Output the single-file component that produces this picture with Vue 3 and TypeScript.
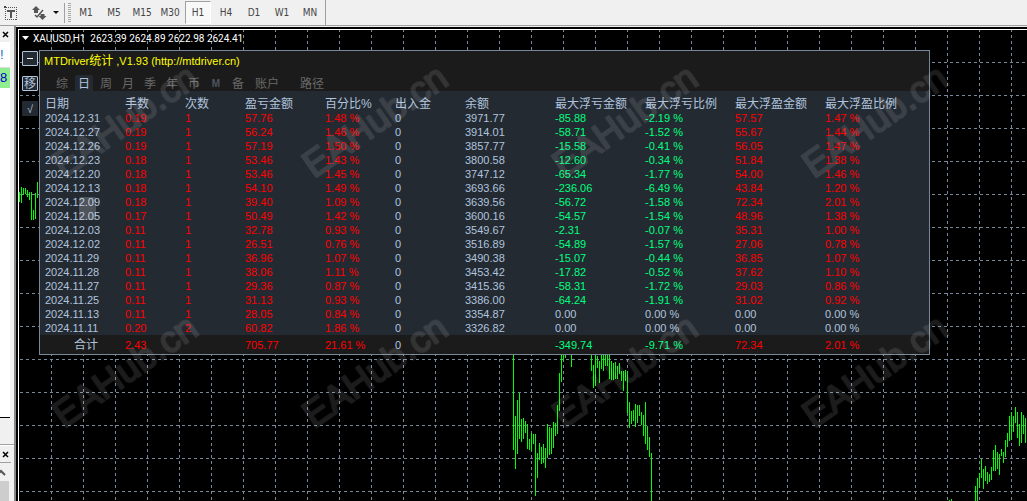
<script setup lang="ts">
interface Bar { x: number; top: number; height: number }

const timeframes: string[] = ['M1', 'M5', 'M15', 'M30', 'H1', 'H4', 'D1', 'W1', 'MN']
const tabs: string[] = ['综', '日', '周', '月', '季', '年', '币', 'M', '备', '账户', '路径']
const headers: string[] = ['日期', '手数', '次数', '盈亏金额', '百分比%', '出入金', '余额', '最大浮亏金额', '最大浮亏比例', '最大浮盈金额', '最大浮盈比例']

const rows: string[][] = [
  ['2024.12.31', '0.19', '1', '57.76', '1.48 %', '0', '3971.77', '-85.88', '-2.19 %', '57.57', '1.47 %'],
  ['2024.12.27', '0.19', '1', '56.24', '1.46 %', '0', '3914.01', '-58.71', '-1.52 %', '55.67', '1.44 %'],
  ['2024.12.26', '0.19', '1', '57.19', '1.50 %', '0', '3857.77', '-15.58', '-0.41 %', '56.05', '1.47 %'],
  ['2024.12.23', '0.18', '1', '53.46', '1.43 %', '0', '3800.58', '-12.60', '-0.34 %', '51.84', '1.38 %'],
  ['2024.12.20', '0.18', '1', '53.46', '1.45 %', '0', '3747.12', '-65.34', '-1.77 %', '54.00', '1.46 %'],
  ['2024.12.13', '0.18', '1', '54.10', '1.49 %', '0', '3693.66', '-236.06', '-6.49 %', '43.84', '1.20 %'],
  ['2024.12.09', '0.18', '1', '39.40', '1.09 %', '0', '3639.56', '-56.72', '-1.58 %', '72.34', '2.01 %'],
  ['2024.12.05', '0.17', '1', '50.49', '1.42 %', '0', '3600.16', '-54.57', '-1.54 %', '48.96', '1.38 %'],
  ['2024.12.03', '0.11', '1', '32.78', '0.93 %', '0', '3549.67', '-2.31', '-0.07 %', '35.31', '1.00 %'],
  ['2024.12.02', '0.11', '1', '26.51', '0.76 %', '0', '3516.89', '-54.89', '-1.57 %', '27.06', '0.78 %'],
  ['2024.11.29', '0.11', '1', '36.96', '1.07 %', '0', '3490.38', '-15.07', '-0.44 %', '36.85', '1.07 %'],
  ['2024.11.28', '0.11', '1', '38.06', '1.11 %', '0', '3453.42', '-17.82', '-0.52 %', '37.62', '1.10 %'],
  ['2024.11.27', '0.11', '1', '29.36', '0.87 %', '0', '3415.36', '-58.31', '-1.72 %', '29.03', '0.86 %'],
  ['2024.11.25', '0.11', '1', '31.13', '0.93 %', '0', '3386.00', '-64.24', '-1.91 %', '31.02', '0.92 %'],
  ['2024.11.13', '0.11', '1', '28.05', '0.84 %', '0', '3354.87', '0.00', '0.00 %', '0.00', '0.00 %'],
  ['2024.11.11', '0.20', '2', '60.82', '1.86 %', '0', '3326.82', '0.00', '0.00 %', '0.00', '0.00 %'],
]
const totals: string[] = ['合计', '2.43', '', '705.77', '21.61 %', '0', '', '-349.74', '-9.71 %', '72.34', '2.01 %']

function tone(value: string, column: number): string {
  if (column === 0 || column === 6) return ''
  const n = parseFloat(value)
  return n > 0 ? 'gain' : n < 0 ? 'loss' : ''
}

// Each run: first x, then the high/low of consecutive bars placed two pixels apart.
function run(start: number, ranges: number[][]): Bar[] {
  return ranges.map(([top, bottom], i) => ({ x: start + i * 2, top, height: bottom - top }))
}

const bars: Bar[] = [
  ...run(0, [[162, 172], [157, 173], [158, 165], [158, 164], [160, 167], [162, 170], [162, 190], [180, 190], [163, 189], [152, 168]]),
  ...run(494, [[320, 420], [386, 439], [370, 424], [363, 409], [389, 412], [388, 409], [391, 403], [394, 419], [409, 420], [403, 421], [404, 414], [404, 466], [423, 448], [413, 430], [417, 434], [414, 433], [418, 438], [394, 428], [397, 425], [398, 424], [392, 418], [393, 406], [375, 404], [343, 381], [320, 352], [320, 331], [320, 328]]),
  ...run(552, [[320, 337]]),
  ...run(572, [[320, 341], [335, 358], [320, 356], [326, 338], [331, 353], [320, 339], [320, 341], [320, 336], [320, 336], [320, 349], [331, 350], [333, 350], [332, 349], [336, 349], [333, 344], [341, 351], [341, 361], [340, 351], [341, 383], [372, 398], [381, 394], [380, 391], [374, 397], [375, 393], [375, 386], [382, 395], [385, 406], [372, 414], [396, 420], [407, 427], [423, 471]]),
  ...run(930, [[470, 471], [469, 471]]),
  ...run(956, [[456, 471], [448, 471], [443, 458], [429, 448], [439, 459], [436, 451], [442, 454], [444, 452], [437, 450], [420, 441], [415, 441], [422, 439], [424, 445], [419, 426], [422, 433], [410, 427], [403, 417], [386, 411], [382, 410], [386, 402], [377, 393], [382, 408], [394, 416], [382, 413], [385, 404], [388, 413]]),
]

const marks: number[][] = [179, 429].flatMap((y) => [64, 314, 564, 814].map((x) => [x, y]))
</script>

<template>
  <div class="terminal">
    <header class="toolbar">
      <button class="tool text-tool" type="button" aria-label="Text label">
        <svg width="14" height="16" viewBox="0 0 14 16" shape-rendering="crispEdges">
          <rect x="1.5" y="2.5" width="11" height="12" fill="none" stroke="#555" stroke-dasharray="1 1" />
          <rect x="0" y="1" width="2" height="2" fill="#444" />
          <path d="M3 5h8v2h-3v6h-2v-6h-3z" fill="#555" />
        </svg>
      </button>
      <button class="tool arrow-tool" type="button" aria-label="Arrows">
        <svg width="28" height="16" viewBox="0 0 28 16">
          <path d="M4 1L8 5H6V8H2V5H0z M10.500 15L6.500 11H8.500V9H12.500V11H14.500z" fill="#555" />
          <path d="M3 10l2 2 6-7" fill="none" stroke="#555" stroke-width="1.500" />
          <path d="M21 6h6l-3 3z" fill="#111" />
        </svg>
      </button>
      <span class="grip"></span>
      <nav class="frames" aria-label="Timeframes">
        <button v-for="t in timeframes" :key="t" type="button" :class="['frame', { pressed: t === 'H1' }]">{{ t }}</button>
      </nav>
    </header>

    <main class="workspace">
      <aside class="dock">
        <section class="watch">
          <div class="dock-head"><button type="button" class="close" aria-label="Close market watch">
            <svg width="7" height="7" viewBox="0 0 7 7"><path d="M1 1l5 5M6 1l-5 5" stroke="#000" stroke-width="1.500" /></svg>
          </button></div>
          <div class="list">
            <div class="item alert">!</div>
            <div class="item price">8</div>
          </div>
        </section>
        <section class="navigator">
          <div class="dock-head"><button type="button" class="close" aria-label="Close navigator">
            <svg width="7" height="7" viewBox="0 0 7 7"><path d="M1 1l5 5M6 1l-5 5" stroke="#000" stroke-width="1.500" /></svg>
          </button></div>
          <div class="scroll">
            <svg width="9" height="18" viewBox="0 0 9 18"><path d="M-3 12l4-4 4 4" fill="none" stroke="#555" stroke-width="2" /></svg>
            <div class="thumb"></div>
          </div>
        </section>
      </aside>

      <section class="chart">
        <svg class="plot" width="100%" height="100%" shape-rendering="crispEdges" aria-hidden="true">
          <defs>
            <pattern id="columns" width="32" height="6" y="-1" patternUnits="userSpaceOnUse">
              <rect width="1" height="3" fill="#778899" />
            </pattern>
            <pattern id="levels" x="1" y="32" width="6" height="33" patternUnits="userSpaceOnUse">
              <rect width="3" height="1" fill="#778899" />
            </pattern>
          </defs>
          <rect x="1" width="100%" height="100%" fill="url(#columns)" />
          <rect x="1" width="100%" height="100%" fill="url(#levels)" />
          <rect v-for="b in bars" :key="b.x" :x="b.x" :y="b.top" width="1" :height="b.height" fill="#00ff00" />
        </svg>

        <div class="quote">
          <svg width="7" height="4" viewBox="0 0 7 4"><path d="M0 0h7L3.500 4z" fill="#fff" /></svg>
          <span>XAUUSD,H1&nbsp; 2623.39 2624.89 2622.98 2624.41</span>
        </div>

        <div class="overlay">
          <div class="side">
            <button type="button" class="key framed" aria-label="Minimize"><i class="dash"></i></button>
            <button type="button" class="key framed move">移</button>
            <button type="button" class="key check">√</button>
          </div>
          <article class="panel">
            <h1>MTDriver<span class="cjk">统计</span> ,V1.93 (http://mtdriver.cn)</h1>
            <nav class="tabs" aria-label="统计">
              <button v-for="t in tabs" :key="t" type="button" :class="['tab', { active: t === '日', wide: t.length > 1, latin: t === 'M' }]">{{ t }}</button>
            </nav>
            <table>
              <colgroup>
                <col class="w80" /><col class="w60" /><col class="w60" /><col class="w80" /><col class="w70" /><col class="w70" />
                <col class="w90" /><col class="w90" /><col class="w90" /><col class="w90" /><col class="last" />
              </colgroup>
              <thead>
                <tr><th v-for="h in headers" :key="h" scope="col">{{ h }}</th></tr>
              </thead>
              <tbody>
                <tr v-for="r in rows" :key="r[0]">
                  <td v-for="(v, i) in r" :key="i" :class="tone(v, i)">{{ v }}</td>
                </tr>
              </tbody>
              <tfoot>
                <tr>
                  <td v-for="(v, i) in totals" :key="i" :class="[tone(v, i), { sum: i === 0 }]">{{ v }}</td>
                </tr>
              </tfoot>
            </table>
          </article>
        </div>
      </section>
    </main>

    <svg class="watermark" width="100%" height="100%" aria-hidden="true">
      <rect x="79" y="197" width="17" height="23" rx="2" fill="#fff" fill-opacity="0.2" />
      <g opacity="0.11">
        <text v-for="(m, i) in marks" :key="i" :transform="`translate(${m[0]} ${m[1]}) rotate(-35)`">EAHub.cn</text>
      </g>
    </svg>
  </div>
</template>

<style>
body {
  margin: 0;
  overflow: hidden;
  background: #000;
}
</style>

<style scoped>
.terminal {
  position: relative;
  display: flex;
  flex-direction: column;
  height: 100vh;
  font-family: "Liberation Sans", "Noto Sans CJK SC", sans-serif;
  font-size: 11px;
}
button {
  margin: 0;
  padding: 0;
  border: 0;
  background: none;
  font: inherit;
  color: inherit;
}
svg {
  display: block;
}
.toolbar {
  display: flex;
  align-items: center;
  height: 25px;
  flex: none;
  background: #f0f0f0;
  border-bottom: 1px solid #a0a0a0;
}
.text-tool {
  margin-left: 4px;
}
.arrow-tool {
  margin-left: 14px;
}
.grip {
  width: 3px;
  height: 20px;
  margin-left: 4px;
  padding: 0 2px 0 3px;
  border-left: 1px solid #a0a0a0;
  background: repeating-linear-gradient(#a8a8a8 0 1px, #f0f0f0 1px 2px) content-box;
}
.frames {
  display: flex;
  gap: 2px;
  height: 25px;
  align-items: center;
  padding-right: 2px;
  border-right: 1px solid #a0a0a0;
}
.frame {
  box-sizing: border-box;
  width: 26px;
  height: 23px;
  border: 1px solid transparent;
  font-family: "DejaVu Sans Condensed", "DejaVu Sans", sans-serif;
  font-size: 10px;
  color: #444;
}
.pressed {
  border-color: #a0a0a0 #fff #fff #a0a0a0;
  background: #f8f8f8;
}
.workspace {
  display: flex;
  flex: 1;
  min-height: 0;
  background: #f0f0f0;
}
.dock {
  box-sizing: border-box;
  width: 16px;
  flex: none;
  display: flex;
  flex-direction: column;
  border-right: 2px solid #888;
}
.watch {
  flex: 1;
  display: flex;
  flex-direction: column;
  border-bottom: 1px solid #a0a0a0;
}
.dock-head {
  height: 16px;
  display: flex;
  align-items: center;
}
.close {
  margin-left: 2px;
}
.list {
  flex: 1;
  width: 10px;
  margin-bottom: 26px;
  background: #fff;
  border-bottom: 1px solid #000;
}
.item {
  height: 20px;
  line-height: 20px;
  font-size: 13px;
  box-sizing: border-box;
  overflow: hidden;
}
.alert {
  height: 26px;
  padding-top: 3px;
  color: #0a6fc4;
  border-bottom: 1px solid #ddd;
}
.price {
  background: #90ee90;
  color: #00c;
}
.navigator {
  height: 55px;
  flex: none;
  border-top: 1px solid #fff;
}
.scroll {
  border-top: 1px solid #a0a0a0;
  height: 38px;
  width: 11px;
}
.thumb {
  width: 9px;
  height: 20px;
  background: #cdcdcd;
}
.chart {
  position: relative;
  box-sizing: border-box;
  flex: 1;
  min-width: 0;
  margin: 3px 0 0 2px;
  border-left: 1px solid #fff;
  border-top: 1px solid #fff;
  outline: 2px solid #000;
  background: #000;
  overflow: hidden;
}
.plot {
  position: absolute;
  left: 0;
  top: 0;
}
.quote {
  position: relative;
  display: flex;
  align-items: center;
  gap: 4px;
  height: 16px;
  margin-bottom: 4px;
  padding-left: 3px;
  color: #fff;
  font-family: Roboto, sans-serif;
  font-size: 10px;
  white-space: pre;
}
.overlay {
  position: relative;
  display: flex;
  align-items: flex-start;
  padding-left: 3px;
  gap: 1px;
}
.side {
  display: flex;
  flex-direction: column;
  padding-top: 1px;
  gap: 10px;
}
.key {
  box-sizing: border-box;
  display: flex;
  align-items: center;
  justify-content: center;
  width: 16px;
  height: 15px;
  border-radius: 1px;
  background: #242a32;
  color: #b0c4de;
}
.framed {
  border: 1px solid #b0c4de;
}
.move {
  font-size: 12px;
  line-height: 12px;
}
.dash {
  width: 6px;
  height: 1px;
  background: #fff;
}
.panel {
  width: max-content;
  border: 1px solid #778899;
  background: #1b1b1b;
  color: #b0c4de;
}
h1 {
  margin: 0;
  padding-left: 4px;
  font-size: 11px;
  font-weight: 400;
  line-height: 20px;
  height: 20px;
  color: #ff0;
}
.cjk {
  font-size: 12px;
}
.tabs {
  display: flex;
  padding: 4px 0 0 11px;
}
.tab {
  box-sizing: border-box;
  width: 18px;
  height: 16px;
  margin: 0 2px;
  padding-top: 2px;
  border-radius: 2px 2px 0 0;
  font-size: 12px;
  line-height: 14px;
  color: #696969;
}
.latin {
  font-size: 10px;
  color: #4a5560;
  font-weight: 700;
}
.wide {
  width: 41px;
  padding-left: 4px;
  text-align: left;
}
.active {
  background: #242a32;
  color: #b0c4de;
}
table {
  border-collapse: collapse;
  background: #242a32;
}
.w60 { width: 60px; }
.w70 { width: 70px; }
.w80 { width: 80px; }
.w90 { width: 90px; }
.last { width: 109px; }
th,
td {
  height: 14px;
  padding: 0 0 0 5px;
  line-height: 14px;
  text-align: left;
  font-weight: 400;
  white-space: nowrap;
}
th {
  height: 13px;
  padding-top: 7px;
  font-size: 12px;
  line-height: 13px;
}
tfoot td {
  height: 19px;
  background: #1b1b1b;
}
tfoot .sum {
  padding-right: 22px;
  text-align: right;
  font-size: 12px;
}
.gain {
  color: #f00;
}
.loss {
  color: #00ff7f;
}
.watermark {
  position: absolute;
  inset: 0;
  pointer-events: none;
}
.watermark text {
  font-size: 37px;
  fill: #fff;
  stroke: #fff;
  stroke-width: 2px;
  stroke-linejoin: round;
}
</style>
